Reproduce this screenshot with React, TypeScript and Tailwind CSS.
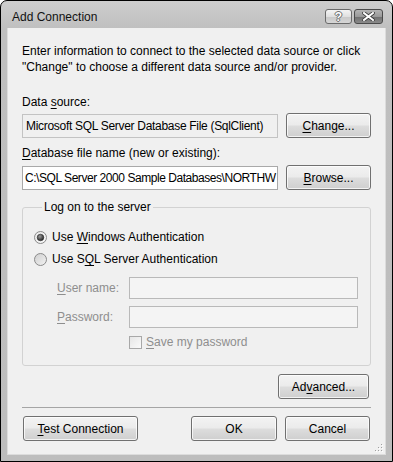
import React from "react";

function U({ children }: { children: React.ReactNode }) {
  return <span className="underline underline-offset-[2px] decoration-[1px]">{children}</span>;
}

function Btn({ children, className = "" }: { children: React.ReactNode; className?: string }) {
  return (
    <div
      className={
        "h-[25px] flex items-center justify-center rounded-[3px] border border-[#707070] bg-[linear-gradient(to_bottom,#f3f3f3_0%,#ebebeb_48%,#dddddd_52%,#cfcfcf_100%)] shadow-[inset_0_0_0_1px_rgba(255,255,255,0.75)] text-[12px] leading-[16px] text-black " +
        className
      }
    >
      {children}
    </div>
  );
}

function Radio({ checked }: { checked?: boolean }) {
  const id = checked ? "rgc" : "rgu";
  return (
    <svg width="13" height="13" viewBox="0 0 13 13" className="shrink-0">
      <defs>
        <linearGradient id={id} x1="0" y1="0" x2="1" y2="1">
          <stop offset="0" stopColor={checked ? "#e8e8e8" : "#cfcfcf"} />
          <stop offset="1" stopColor={checked ? "#fafafa" : "#f2f2f2"} />
        </linearGradient>
        <radialGradient id={id + "d"} cx="0.4" cy="0.35" r="0.7">
          <stop offset="0" stopColor="#9a9a9a" />
          <stop offset="1" stopColor="#1e1e1e" />
        </radialGradient>
      </defs>
      <circle cx="6.5" cy="6.5" r="6" fill={`url(#${id})`} stroke="#8a8a8a" strokeWidth="1" />
      {checked && <circle cx="6.5" cy="6.5" r="3.3" fill={`url(#${id}d)`} stroke="#2a2a2a" strokeWidth="0.6" />}
    </svg>
  );
}

export default function App() {
  return (
    <div className="w-[393px] h-[462px] font-['Liberation_Sans',Arial,sans-serif] text-[12px] leading-[16px] text-black">
      <div className="w-full h-full flex flex-col border border-black rounded-t-[7px] bg-[linear-gradient(to_bottom,#cdcdcd_0px,#bfbfbf_28px,#bdbdbd_100%)] overflow-hidden">
        {/* Title bar */}
        <div className="h-[27px] pt-[5px] pl-[11px] pr-[9px] flex items-center justify-between shrink-0">
          <span className="text-[12px] text-[#111]">Add Connection</span>
          <div className="flex items-center gap-[2px] -mt-[1px]">
            <div className="w-[27px] h-[15px] rounded-[3px] border border-[#6a6a6a] bg-[linear-gradient(to_bottom,#f4f4f4_0%,#e0e0e0_50%,#c8c8c8_51%,#d6d6d6_100%)] flex items-center justify-center">
              <span className="text-[12px] leading-none font-bold text-white [text-shadow:0_0_1px_#555,1px_0_0_#777,-1px_0_0_#777,0_1px_0_#777,0_-1px_0_#777]">?</span>
            </div>
            <div className="w-[29px] h-[15px] rounded-[3px] border border-[#4a4a4a] bg-[linear-gradient(to_bottom,#b4b4b4_0%,#9a9a9a_50%,#6e6e6e_51%,#8a8a8a_100%)] flex items-center justify-center">
              <svg width="13" height="9" viewBox="0 0 13 9">
                <path d="M2 1 L11 8 M11 1 L2 8" stroke="#3a3a3a" strokeWidth="3.6" strokeLinecap="square" />
                <path d="M2 1 L11 8 M11 1 L2 8" stroke="#ffffff" strokeWidth="2" strokeLinecap="square" />
              </svg>
            </div>
          </div>
        </div>

        {/* Client area + side frames */}
        <div className="flex-1 flex px-[6px] pb-[6px]">
          <div className="relative flex-1 flex flex-col bg-[#f0f0f0] border border-t-0 border-[#dcdcdc] pt-[15px] px-[14px]">
            <p className="leading-[16px]">
              Enter information to connect to the selected data source or click
              <br />
              "Change" to choose a different data source and/or provider.
            </p>

            <div className="mt-[19px]">
              Data <U>s</U>ource:
            </div>
            <div className="mt-[3px] flex items-center gap-[8px] h-[25px]">
              <div className="w-[256px] h-[24px] border border-[#c3c3c3] bg-[#f0f0f0] flex items-center pl-[3px] whitespace-nowrap overflow-hidden tracking-[-0.3px]">
                Microsoft SQL Server Database File (SqlClient)
              </div>
              <Btn className="w-[85px]">
                <span>
                  <U>C</U>hange...
                </span>
              </Btn>
            </div>

            <div className="mt-[7px]">
              <U>D</U>atabase file name (new or existing):
            </div>
            <div className="mt-[4px] flex items-center gap-[8px] h-[25px]">
              <div className="w-[256px] h-[24px] border border-[#a9a9a9] bg-white flex items-center pl-[2px] whitespace-nowrap overflow-hidden tracking-[-0.45px]">
                C:\SQL Server 2000 Sample Databases\NORTHW
              </div>
              <Btn className="w-[85px]">
                <span>
                  <U>B</U>rowse...
                </span>
              </Btn>
            </div>

            {/* Group box */}
            <fieldset className="relative mt-[9px] h-[167px] border border-[#d2d2d2] rounded-[3px] pl-[11px] pr-[12px] mx-0">
              <legend className="ml-[8px] px-[2px] leading-[16px]">Log on to the server</legend>
              <div className="mt-[14px] flex items-center gap-[5px] h-[16px]">
                <Radio checked />
                <span>
                  Use <U>W</U>indows Authentication
                </span>
              </div>
              <div className="mt-[6px] flex items-center gap-[5px] h-[16px]">
                <Radio />
                <span>
                  Use S<U>Q</U>L Server Authentication
                </span>
              </div>
              <div className="mt-[10px] flex items-center h-[22px] text-[#8e8e8e]">
                <div className="w-[95px] pl-[23px]">
                  <U>U</U>ser name:
                </div>
                <div className="flex-1 h-[22px] border border-[#b9b9b9] bg-[#f4f4f4]" />
              </div>
              <div className="mt-[7px] flex items-center h-[22px] text-[#8e8e8e]">
                <div className="w-[95px] pl-[23px]">
                  <U>P</U>assword:
                </div>
                <div className="flex-1 h-[22px] border border-[#b9b9b9] bg-[#f4f4f4]" />
              </div>
              <div className="mt-[6px] flex items-center h-[16px] pl-[95px] gap-[4px] text-[#8e8e8e]">
                <div className="w-[13px] h-[13px] border border-[#a8a8a8] bg-[linear-gradient(135deg,#e6e6e6,#fafafa)]" />
                <span>
                  <U>S</U>ave my password
                </span>
              </div>
            </fieldset>

            <div className="mt-[8px] flex justify-end pr-[2px]">
              <Btn className="w-[91px]">
                <span>
                  Ad<U>v</U>anced...
                </span>
              </Btn>
            </div>

            <div className="mt-[8px] h-px bg-[#a5a5a5]" />

            <div className="mt-[8px] flex items-center px-[1px]">
              <Btn className="w-[115px]">
                <span>
                  <U>T</U>est Connection
                </span>
              </Btn>
              <div className="flex-1" />
              <Btn className="w-[86px]">OK</Btn>
              <Btn className="w-[85px] ml-[8px]">Cancel</Btn>
            </div>

            {/* resize grip */}
            <svg className="absolute right-[2px] bottom-[2px]" width="10" height="10" viewBox="0 0 10 10">
              {[
                [8, 2],
                [8, 5],
                [5, 5],
                [8, 8],
                [5, 8],
                [2, 8],
              ].map(([x, y], i) => (
                <g key={i}>
                  <rect x={x} y={y} width="1" height="1" fill="#a0a0a0" />
                  <rect x={x + 1} y={y + 1} width="1" height="1" fill="#ffffff" />
                </g>
              ))}
            </svg>
          </div>
        </div>
      </div>
    </div>
  );
}
